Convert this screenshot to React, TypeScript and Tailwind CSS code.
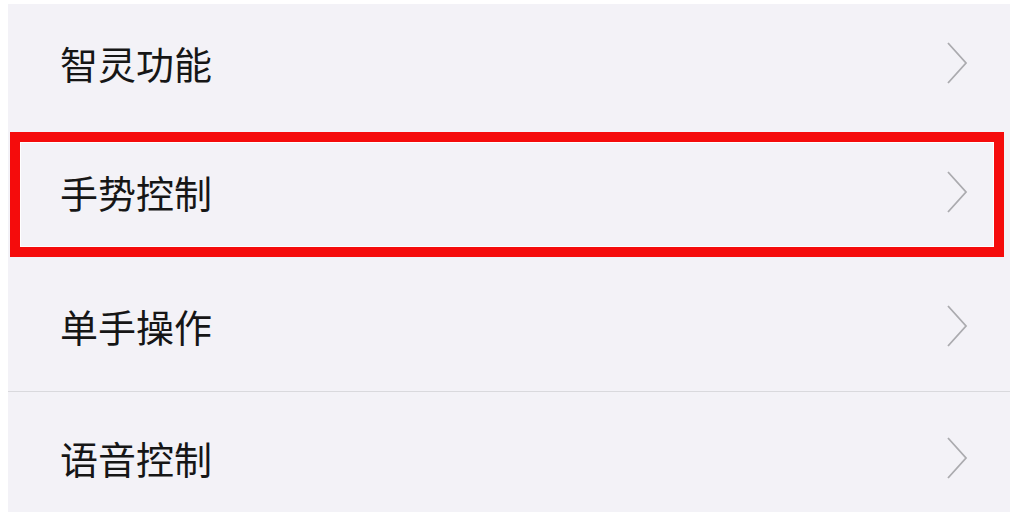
import React from 'react';

const Chevron = () => (
  <svg width="22" height="42" viewBox="0 0 22 42" fill="none" className="shrink-0">
    <polyline points="2,1 20,21 2,41" stroke="#ababaf" strokeWidth="1.8" strokeLinejoin="miter" />
  </svg>
);

type RowProps = {
  label: string;
  height: string;
  highlight?: boolean;
  divider?: boolean;
  shift?: string;
};

const Row = ({ label, height, highlight, divider, shift }: RowProps) => (
  <div className={`relative flex items-center justify-between pl-[52px] pr-[42px] ${height} ${shift ?? ''} ${divider ? 'border-b border-[#d9d9dd]' : ''}`}>
    <span className="text-[38px] leading-none text-[#161616]">{label}</span>
    <Chevron />
    {highlight && (
      <div className="absolute left-[2px] right-[6px] top-[3px] bottom-[3px] border-[10px] border-[#f50c0c] pointer-events-none">
        <div className="h-full w-full border border-white" />
      </div>
    )}
  </div>
);

export default function App() {
  return (
    <div
      className="w-[1012px] h-[516px] bg-white pt-[4px] pl-[8px] pr-[2px] pb-[4px] overflow-hidden"
      style={{ fontFamily: '"Noto Sans CJK SC", "Noto Sans", sans-serif' }}
    >
      <div className="flex flex-col h-full bg-[#f3f2f7]">
        <Row label="智灵功能" height="h-[125px]" shift="pb-[8px]" />
        <Row label="手势控制" height="h-[131px]" highlight shift="pb-[5px]" />
        <Row label="单手操作" height="h-[132px]" divider />
        <Row label="语音控制" height="h-[120px]" shift="pt-[12px]" />
      </div>
    </div>
  );
}
